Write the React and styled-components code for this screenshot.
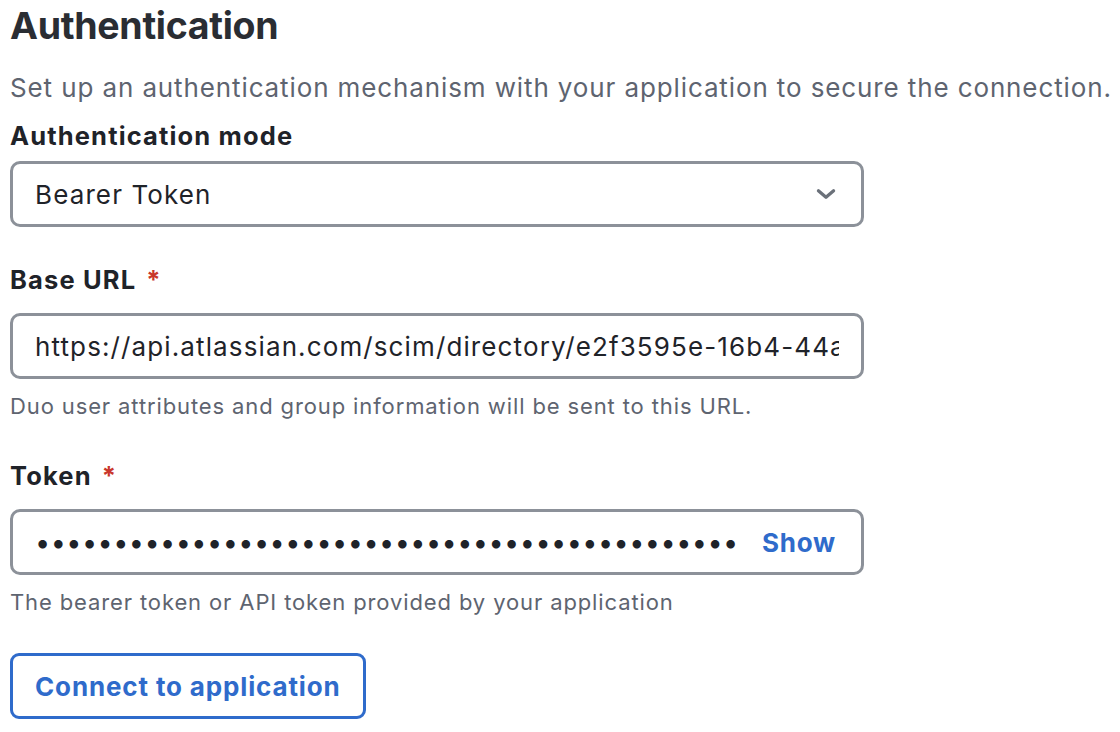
import React from 'react'
import styled, { createGlobalStyle } from 'styled-components'

const GlobalStyle = createGlobalStyle`
  body {
    margin: 0;
    background: #ffffff;
    font-family: Inter, "Noto Sans", "Liberation Sans", sans-serif;
    color: #1f2329;
  }
`;

const Page = styled.div`
  padding: 3px 10px 0;
  display: flex;
  flex-direction: column;
  align-items: flex-start;
`;

const Heading = styled.h1`
  margin: 0;
  font-size: 37.5px;
  line-height: 46px;
  font-weight: 700;
  letter-spacing: -0.3px;
  color: #2a2d33;
`;

const Description = styled.p`
  margin: 23px 0 0;
  font-size: 26px;
  line-height: 32px;
  letter-spacing: 0.034em;
  color: #5e6470;
  white-space: nowrap;
`;

const Label = styled.label`
  display: block;
  margin-top: ${p => p.$top}px;
  margin-bottom: ${p => p.$bottom}px;
  font-size: 25.5px;
  line-height: 32px;
  font-weight: 700;
  letter-spacing: 0.045em;
  color: #1f2329;
`;

const Required = styled.span`
  color: #c9372c;
  margin-left: 10px;
`;

const Field = styled.div`
  box-sizing: border-box;
  width: 854px;
  height: 66px;
  flex-shrink: 0;
  border: 3px solid #8c9199;
  border-radius: 10px;
  display: flex;
  align-items: center;
  padding: 0 ${p => p.$right || 22}px 0 22px;
  gap: 16px;
  overflow: hidden;
  font-size: 26px;
  letter-spacing: 0.043em;
  color: #1f2329;
`;

const Value = styled.span`
  flex: 1;
  white-space: nowrap;
  overflow: hidden;
`;

const Dots = styled.span`
  flex: none;
  white-space: nowrap;
  font-size: 27px;
  letter-spacing: 0.45px;
  color: #1f2329;
`;

const ShowButton = styled.button`
  margin-left: auto;
  border: none;
  background: none;
  padding: 0;
  font: inherit;
  font-weight: 700;
  letter-spacing: 0.03em;
  color: #2f6bcb;
  cursor: pointer;
`;

const Helper = styled.div`
  margin-top: 13px;
  font-size: 22px;
  line-height: 28px;
  letter-spacing: 0.04em;
  color: #5e6470;
`;

const ConnectButton = styled.button`
  margin-top: 37px;
  box-sizing: border-box;
  height: 66px;
  padding: 0 22px;
  border: 3px solid #2f6bcb;
  border-radius: 9px;
  background: #fff;
  font-family: inherit;
  font-size: 26px;
  font-weight: 700;
  letter-spacing: 0.033em;
  color: #2f6bcb;
`;

const Chevron = () => (
  <svg width="26" height="26" viewBox="0 0 24 24" fill="none" stroke="#6b717a" strokeWidth="3" strokeLinecap="round" strokeLinejoin="round">
    <path d="M5 9l7 6 7-6" />
  </svg>
)

export default function App() {
  return (
    <Page>
      <GlobalStyle />
      <Heading>Authentication</Heading>
      <Description>Set up an authentication mechanism with your application to secure the connection.</Description>
      <Label $top={16} $bottom={9}>Authentication mode</Label>
      <Field>
        <Value>Bearer Token</Value>
        <Chevron />
      </Field>

      <Label $top={37} $bottom={17}>Base URL<Required>*</Required></Label>
      <Field>
        <Value>https://api.atlassian.com/scim/directory/e2f3595e-16b4-44a8-9c1e-7d2b3f0a6c41</Value>
      </Field>
      <Helper>Duo user attributes and group information will be sent to this URL.</Helper>

      <Label $top={40} $bottom={17}>Token<Required>*</Required></Label>
      <Field $right={25}>
        <Dots>{'•'.repeat(45)}</Dots>
        <ShowButton>Show</ShowButton>
      </Field>
      <Helper>The bearer token or API token provided by your application</Helper>

      <ConnectButton>Connect to application</ConnectButton>
    </Page>
  )
}
